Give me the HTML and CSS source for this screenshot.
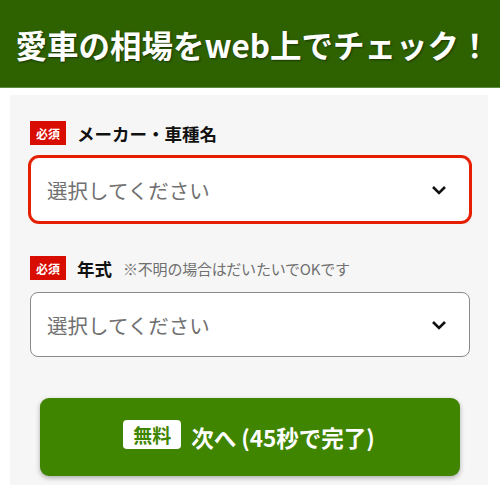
FILE: index.html
```html
<!DOCTYPE html>
<html lang="ja">
<head>
<meta charset="utf-8">
<link rel="stylesheet" href="styles.css">
</head>
<body>
<header class="hero">
  <h1 class="hero-title">愛車の相場をweb上でチェック！</h1>
</header>
<main class="panel">
  <div class="field">
    <div class="label-row">
      <span class="req">必須</span>
      <span class="label">メーカー・車種名</span>
    </div>
    <div class="select is-focus">
      <span class="placeholder">選択してください</span>
      <svg class="chev" width="16" height="10" viewBox="0 0 16 10"><path d="M2 2 L8 8 L14 2" fill="none" stroke="#111" stroke-width="2.6"/></svg>
    </div>
  </div>
  <div class="field field-2">
    <div class="label-row">
      <span class="req">必須</span>
      <span class="label">年式</span>
      <span class="note">※不明の場合はだいたいでOKです</span>
    </div>
    <div class="select">
      <span class="placeholder">選択してください</span>
      <svg class="chev" width="16" height="10" viewBox="0 0 16 10"><path d="M2 2 L8 8 L14 2" fill="none" stroke="#111" stroke-width="2.6"/></svg>
    </div>
  </div>
  <div class="btn">
    <span class="free">無料</span>
    <span class="btn-text">次へ (45秒で完了)</span>
  </div>
</main>
</body>
</html>
```
FILE: styles.css
```css
* { box-sizing: border-box; }
body {
  margin: 0;
  background: #fff;
  font-family: "Noto Sans CJK JP", "Noto Sans", sans-serif;
  width: 500px;
}
.hero {
  height: 88px;
  background: #2e6100;
  border-bottom: 1px solid #5e8c3e;
  display: flex;
  align-items: center;
  justify-content: center;
}
.hero-title {
  margin: 0;
  color: #fff;
  font-size: 31.5px;
  font-weight: 700;
  white-space: nowrap;
  text-shadow: 1px 1px 2px rgba(0,0,0,0.45);
  line-height: 1;
  padding: 2px 0 0 6px;
}
.panel {
  margin: 7px 12px 0 10px;
  height: 390px;
  background: #f6f6f6;
  padding: 26px 18px 0 20px;
  display: flex;
  flex-direction: column;
}
.field-2 { margin-top: 34px; }
.label-row {
  display: flex;
  align-items: center;
  height: 24px;
}
.req {
  width: 36px;
  height: 24px;
  background: #d80c00;
  color: #fff;
  font-size: 12px;
  font-weight: 700;
  display: flex;
  align-items: center;
  justify-content: center;
}
.label {
  margin-left: 11px;
  font-size: 17.5px;
  font-weight: 700;
  color: #111;
}
.note {
  margin-left: 11px;
  font-size: 15px;
  color: #707070;
  letter-spacing: -0.2px;
}
.select {
  margin-top: 12px;
  height: 65px;
  background: #fff;
  border: 1px solid #8a8a8a;
  border-radius: 8px;
  display: flex;
  align-items: center;
  justify-content: space-between;
  padding: 0 22px 0 16px;
}
.select.is-focus {
  border: 1px solid #e61e00;
  box-shadow: 0 0 0 2px #e61e00;
  border-radius: 9px;
}
.placeholder {
  font-size: 20.5px;
  color: #707070;
}
.chev { display: block; }
.btn {
  margin: 41px 10px 0 10px;
  height: 78px;
  background: #3f8500;
  border-radius: 9px;
  box-shadow: 0 2px 5px rgba(0,0,0,0.3);
  display: flex;
  align-items: center;
  justify-content: center;
  gap: 10px;
  padding-right: 2px;
}
.free {
  background: #fff;
  color: #3f8500;
  font-size: 19px;
  font-weight: 700;
  height: 29px;
  padding: 0 10px;
  margin-bottom: 6px;
  border-radius: 4px;
  display: flex;
  align-items: center;
}
.btn-text {
  color: #fff;
  font-size: 22.5px;
  font-weight: 700;
}
```
